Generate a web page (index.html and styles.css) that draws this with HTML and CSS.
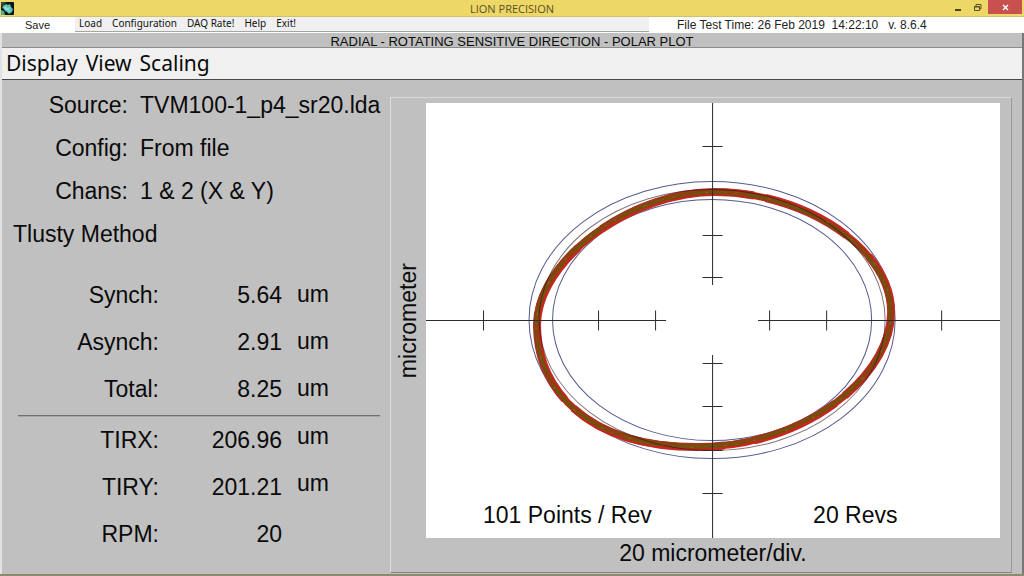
FILE: index.html
```html
<!DOCTYPE html>
<html lang="en">
<head>
<meta charset="utf-8">
<title>LION PRECISION</title>
<link rel="stylesheet" href="styles.css">
</head>
<body class="window">
<header class="titlebar">
  <svg class="app-icon" viewBox="0 0 13 13" aria-hidden="true">
    <rect width="13" height="13" rx="1" fill="#0c1414"/>
    <path d="M0 0h5L3 3 0 5z" fill="#31483f"/>
    <path d="M2 4l3-2 2 1 2-1 1 3 2 2-1 3-3 2-2-2-2-1-1-2-2-1z" fill="#58bdb6"/>
    <path d="M3 5l2-1 1 2 3-1-1 3 2 1-2 1-2-2-2 0z" fill="#8ee0d6"/>
    <path d="M0 8l3 1 1 4H0z" fill="#51a8a0"/>
  </svg>
  <h1 class="titlebar-text">LION PRECISION</h1>
  <div class="window-buttons">
    <button class="win-btn" aria-label="Minimize"><svg viewBox="0 0 9 9" class="win-icon"><path d="M2 6h6v2H2z" fill="#4b4322"/></svg></button>
    <button class="win-btn" aria-label="Restore"><svg viewBox="0 0 9 9" class="win-icon"><path d="M1.500 3.500h5v4h-5zM3 3V1.500h5V6H7M1 4h6" fill="none" stroke="#5b5127"/></svg></button>
    <button class="win-btn win-close" aria-label="Close"><svg viewBox="0 0 9 9" class="win-icon"><path d="M2 2l5 5M7 2L2 7" fill="none" stroke="#fff" stroke-width="1.400"/></svg></button>
  </div>
</header>
<div class="topbar">
  <button class="save">Save</button>
  <nav class="main-menu" aria-label="Main">
    <button class="menu-item">Load</button>
    <button class="menu-item">Configuration</button>
    <button class="menu-item">DAQ Rate!</button>
    <button class="menu-item">Help</button>
    <button class="menu-item">Exit!</button>
  </nav>
  <p class="test-time">File Test Time: 26 Feb 2019&nbsp; 14:22:10&nbsp;&nbsp; v. 8.6.4</p>
</div>
<div class="workspace">
  <h2 class="plot-title">RADIAL - ROTATING SENSITIVE DIRECTION - POLAR PLOT</h2>
  <nav class="plot-menu" aria-label="Plot">
    <button class="plot-menu-item">Display</button>
    <button class="plot-menu-item">View</button>
    <button class="plot-menu-item">Scaling</button>
  </nav>
  <main class="content">
    <section class="info">
      <dl class="source">
        <dt>Source:</dt><dd>TVM100-1_p4_sr20.lda</dd>
        <dt>Config:</dt><dd>From file</dd>
        <dt>Chans:</dt><dd>1 &amp; 2 (X &amp; Y)</dd>
      </dl>
      <p class="method">Tlusty Method</p>
      <table class="results">
        <tbody>
          <tr><th scope="row">Synch:</th><td class="value">5.64</td><td class="unit">um</td></tr>
          <tr><th scope="row">Asynch:</th><td class="value">2.91</td><td class="unit">um</td></tr>
          <tr><th scope="row">Total:</th><td class="value">8.25</td><td class="unit">um</td></tr>
        </tbody>
      </table>
      <hr class="divider">
      <table class="results results-tir">
        <tbody>
          <tr><th scope="row">TIRX:</th><td class="value">206.96</td><td class="unit">um</td></tr>
          <tr><th scope="row">TIRY:</th><td class="value">201.21</td><td class="unit">um</td></tr>
          <tr><th scope="row">RPM:</th><td class="value">20</td><td class="unit"></td></tr>
        </tbody>
      </table>
    </section>
    <figure class="plot-frame">
      <span class="axis-label">micrometer</span>
      <svg class="plot" viewBox="426 103 574 435" role="img" aria-label="Polar plot">
        <!-- limit circles -->
        <ellipse class="limit" cx="712" cy="320" rx="183" ry="138.500"/>
        <ellipse class="limit" cx="712" cy="320" rx="159.500" ry="120.500"/>
        <!-- recorded revolutions -->
        <path class="trace-edge" d="M537 325C537 262 628 192 715 192S891 247 891 312S804 447 697 447S537 392 537 325Z"/>
        <path class="trace-red" d="M537 325C537 262 628 192 715 192S891 247 891 312S804 447 697 447S537 392 537 325Z"/>
        <path class="trace-core" d="M536 325C536 261 627 191 715 192S890 248 891 312S804 446 697 446S536 392 536 325Z"/>
        <path class="trace-green" d="M537 325C537 262 628 192 715 192S889 249 890 312S804 446 697 447S537 392 537 325Z"/>
        <path class="trace-fleck" d="M536 325C536 262 627 192 715 192S891 247 891 312S804 447 697 447S536 393 536 325Z"/>
        <ellipse class="mean" cx="712" cy="320" rx="173" ry="130.500"/>
        <!-- axes and division marks -->
        <path class="axis" d="M712.500 103V285M712.500 355V538M426 320.500H666M758 320.500H1000"/>
        <path class="axis" d="M702.500 146.500h20M702.500 235.500h20M702.500 277.500h20M702.500 363.500h20M702.500 406.500h20M702.500 450.500h20M702.500 493.500h20"/>
        <path class="axis" d="M483.500 310.500v20M598.500 310.500v20M655.500 310.500v20M769.500 310.500v20M826.500 310.500v20M941.500 310.500v20"/>
        <text class="plot-text" x="483" y="523">101 Points / Rev</text>
        <text class="plot-text" x="813" y="523">20 Revs</text>
      </svg>
      <figcaption class="scale">20 micrometer/div.</figcaption>
    </figure>
  </main>
</div>
</body>
</html>
```
FILE: styles.css
```css
* { box-sizing: border-box; }

.window {
  margin: 0;
  min-height: 100vh;
  display: flex;
  flex-direction: column;
  background: #fff;
  color: #0a0a0a;
  font-family: "Liberation Sans", Arial, sans-serif;
  border-bottom: 2px solid #8f8a6a;
}

button {
  border: 0;
  padding: 0;
  margin: 0;
  background: none;
  color: inherit;
  font: inherit;
}

h1, h2, p, dl, dd, figure { margin: 0; font-weight: normal; }

.titlebar {
  display: grid;
  grid-template-columns: 1fr auto 1fr;
  height: 17px;
  background: #edd767;
  border-bottom: 1px solid #d2c070;
}
.app-icon { width: 13px; height: 13px; margin: 2px 0 0 1px; }
.titlebar-text {
  font: 11px/17px "Open Sans", sans-serif;
  color: #5c5023;
}
.window-buttons { display: flex; justify-content: flex-end; padding-right: 2px; }
.win-btn { width: 20px; height: 14px; display: flex; align-items: center; justify-content: center; }
.win-close { width: 34px; background: #c8504f; margin-left: 1px; }
.win-icon { width: 9px; height: 9px; }

.topbar { display: flex; height: 16px; }
.save { width: 75px; font-size: 11px; line-height: 16px; color: #222; }
.main-menu {
  flex: 1;
  display: flex;
  align-items: flex-start;
  gap: 10px;
  height: 15px;
  padding-left: 4px;
  background: #f0f0f0;
  border-bottom: 1px solid #a5a5a5;
}
.menu-item { font: 10px/13px "Noto Sans", sans-serif; color: #111; }
.test-time {
  width: 375px;
  padding-left: 28px;
  font-size: 12px;
  line-height: 16px;
  color: #222;
  white-space: nowrap;
}

.workspace {
  flex: 1;
  display: flex;
  flex-direction: column;
  background: #c0c0c0;
  border-left: 2px solid #e2e2e2;
  border-right: 2px solid #777;
}
.plot-title {
  height: 15px;
  font-size: 13px;
  line-height: 17px;
  text-align: center;
  border-bottom: 1px solid #8c8c8c;
}
.plot-menu {
  display: flex;
  gap: 8px;
  height: 32px;
  padding-left: 4px;
  background: #f0f0f0;
  border-bottom: 1px solid #484848;
}
.plot-menu-item { font: 21px/31px "Noto Sans", sans-serif; }

.content {
  flex: 1;
  display: grid;
  grid-template-columns: 38.4% 1fr;
  padding-right: 10px;
  font-size: 23px;
}

.info { padding: 4px 10px 0 11px; }
.source {
  display: grid;
  grid-template-columns: 115px 1fr;
  column-gap: 12px;
  line-height: 43px;
  text-align: right;
}
.source dd { text-align: left; white-space: nowrap; }
.method { line-height: 43px; }

.results {
  margin-top: 16px;
  border-collapse: collapse;
  table-layout: fixed;
  width: 340px;
  line-height: 47px;
}
.results th { width: 146px; padding: 0; font-weight: normal; text-align: right; }
.results td { padding: 0; vertical-align: top; }
.results .value { width: 123px; text-align: right; }
.results .unit { padding-left: 15px; line-height: 44px; }
.results-tir { margin-top: 0; }
.results-tir .unit { line-height: 39px; }
.divider {
  margin: 2px 0 0 5px;
  border: 0;
  height: 2px;
  background: #707070;
  border-bottom: 1px solid #a5a5a5;
}

.plot-frame {
  display: grid;
  grid-template-columns: 35px 1fr;
  grid-template-rows: auto 1fr;
  margin: 17px 0 1px;
  padding: 5px 11px 0 0;
  border: 1px solid #d8d8d8;
  border-left-color: #e0e0e0;
  border-right-color: #999;
  border-bottom-color: #858585;
}
.axis-label {
  writing-mode: vertical-rl;
  transform: rotate(180deg);
  text-align: center;
  line-height: 35px;
}
.plot { display: block; width: 100%; background: #fff; }
.scale { grid-column: 2; text-align: center; line-height: 30px; }

.axis { fill: none; stroke: #2c2c2c; stroke-width: 1; }
.limit { fill: none; stroke: #565a8c; stroke-width: 1; }
.mean { fill: none; stroke: #301818; stroke-width: 1; opacity: 0.6; }
.trace-edge { fill: none; stroke: #b4344c; stroke-width: 8; stroke-dasharray: 90 30 160 12; }
.trace-red { fill: none; stroke: #cf2418; stroke-width: 7; }
.trace-core { fill: none; stroke: #8a4212; stroke-width: 5; }
.trace-green { fill: none; stroke: #74500f; stroke-width: 3; stroke-dasharray: 70 12 35 20; }
.trace-fleck { fill: none; stroke: #9a6030; stroke-width: 1; stroke-dasharray: 1 9 2 31 3 17; }
.plot-text { font: 23px "Liberation Sans", Arial, sans-serif; fill: #0a0a0a; }
```
